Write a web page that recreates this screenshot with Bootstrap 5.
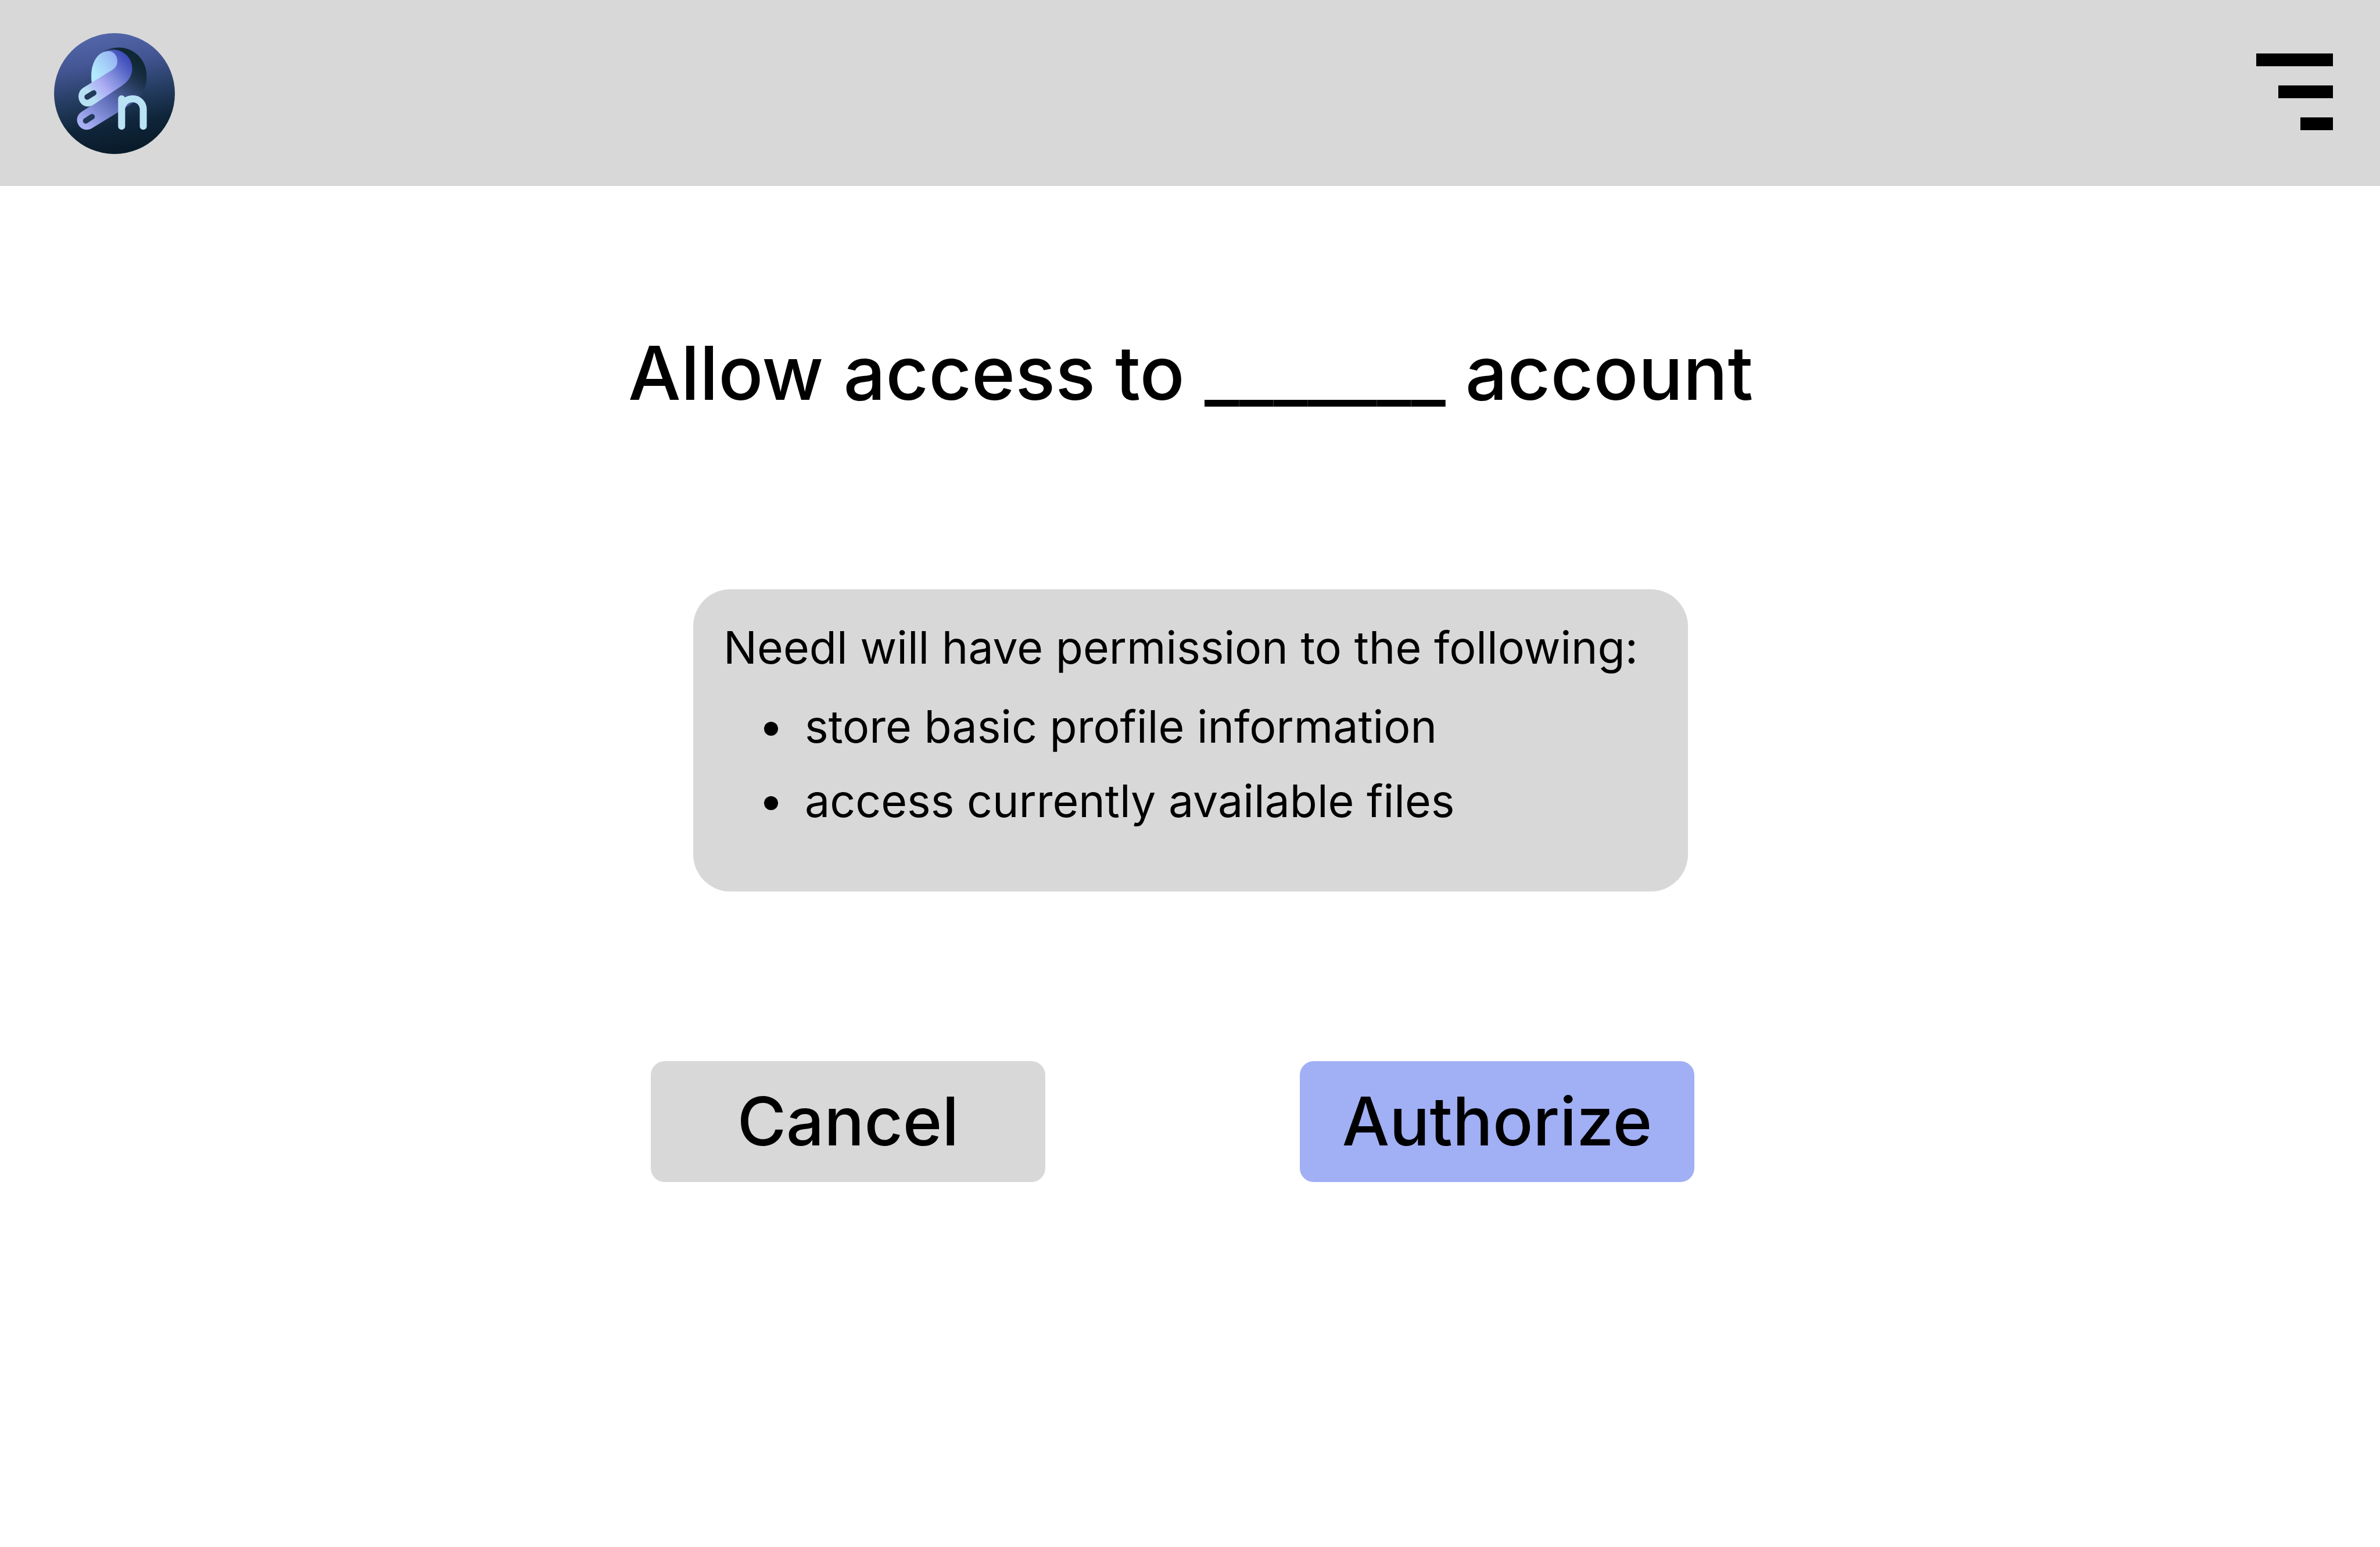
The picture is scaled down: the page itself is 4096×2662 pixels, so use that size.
<!DOCTYPE html>
<html lang="en">
<head>
<meta charset="utf-8">
<meta name="viewport" content="width=device-width, initial-scale=1">
<title>Needl – Allow access</title>
<link href="https://cdn.jsdelivr.net/npm/bootstrap@5.3.0/dist/css/bootstrap.min.css" rel="stylesheet">
<style>
  body { font-family: Inter, "Liberation Sans", sans-serif; color: #000; background: #fff; }
  .topbar { min-height: 320px; padding: 2px 81px 0 93px; background: #d8d8d8; }
  .brand-logo { width: 208px; height: 208px; }
  .menu-toggle svg { width: 132px; height: 138px; }
  .consent { padding: 242px 48px 0 50px; gap: 292px; }
  .consent-title { font-size: 128px; line-height: 160px; font-weight: 500; }
  .scope-card { width: 100%; max-width: 1712px; padding: 36px 52px 92px; border-radius: 64px; background: #d8d8d8; font-size: 77px; line-height: 128px; }
  .scope-list { margin-top: 8px; padding-left: 70px; }
  .scope-list li { gap: 46px; }
  .scope-list li::before { content: ""; flex: none; width: 24px; height: 24px; margin-top: 8px; border-radius: 50%; background: #000; }
  .action-row { gap: 438px; margin-right: 62px; }
  .action-btn { width: 679px; height: 208px; padding: 0; border: 0; border-radius: 24px; font-size: 115px; line-height: 160px; font-weight: 500; color: #000; background: #d8d8d8; }
  .action-btn:hover { color: #000; background: #c8c8c8; }
  .action-main { background: #a1aff5; }
  .action-main:hover { background: #8c9cf0; }
</style>
</head>
<body>
<header class="topbar d-flex align-items-center justify-content-between">
  <a href="#" class="d-block" aria-label="Needl home">
    <svg class="brand-logo d-block" viewBox="93 76 810 810" aria-hidden="true">
      <defs>
        <linearGradient id="disc" gradientUnits="userSpaceOnUse" x1="430" y1="76" x2="570" y2="886">
          <stop offset="0" stop-color="#5366aa"/><stop offset=".25" stop-color="#435592"/><stop offset=".5" stop-color="#263e63"/><stop offset=".75" stop-color="#0f253a"/><stop offset="1" stop-color="#081a28"/>
        </linearGradient>
        <linearGradient id="back" gradientUnits="userSpaceOnUse" x1="280" y1="690" x2="650" y2="270">
          <stop offset="0" stop-color="#abb1f5"/><stop offset=".2" stop-color="#8793dc"/><stop offset=".45" stop-color="#5b6bb5"/><stop offset=".66" stop-color="#364a78"/><stop offset=".86" stop-color="#1a3148"/><stop offset="1" stop-color="#102734"/>
        </linearGradient>
        <linearGradient id="front" gradientUnits="userSpaceOnUse" x1="330" y1="480" x2="605" y2="250">
          <stop offset="0" stop-color="#b7e0f4"/><stop offset=".1" stop-color="#b4c9f5"/><stop offset=".28" stop-color="#aeaff5"/><stop offset=".55" stop-color="#7f8bdc"/><stop offset=".8" stop-color="#5463c4"/><stop offset="1" stop-color="#3a49b8"/>
        </linearGradient>
        <linearGradient id="petal" gradientUnits="userSpaceOnUse" x1="360" y1="340" x2="510" y2="230">
          <stop offset="0" stop-color="#b3e9fc"/><stop offset=".5" stop-color="#a5cff8"/><stop offset="1" stop-color="#94b0f2"/>
        </linearGradient>
      </defs>
      <circle cx="498" cy="481" r="405" fill="url(#disc)"/>
      <path fill="url(#back)" d="M278 603 L345 560 L345 330 C350 240 430 172 527 172 C630 172 713 255 713 360 C713 450 680 510 610 552 L348 713 C318 732 278 724 258 693 C238 662 246 624 278 603 Z"/>
      <path fill="url(#front)" d="M289 442 L346 407 C330 280 395 187 490 187 C560 187 617 244 617 312 C617 362 590 402 545 430 L358 555 C322 579 286 567 267 537 C248 505 256 462 289 442 Z"/>
      <path fill="url(#petal)" d="M346 407 C330 290 378 197 458 197 C494 197 517 228 517 264 C517 292 503 310 482 323 Z"/>
      <path fill="none" stroke="#22395a" stroke-width="37" stroke-linecap="round" d="M315 504 L359 477 M305 664 L348 636"/>
      <path fill="none" stroke="#b9e3f5" stroke-width="47" stroke-linecap="round" stroke-linejoin="round" d="M546 700 V516 M546 588 C546 548 578 516 620 516 C662 516 691 548 691 588 V700"/>
    </svg>
  </a>
  <button type="button" class="menu-toggle btn border-0 p-0 rounded-0" aria-label="Menu">
    <svg class="d-block" viewBox="0 0 132 138" aria-hidden="true">
      <path d="M0 0H132V22H0Z M38 55H132V77H38Z M76 110H132V132H76Z"/>
    </svg>
  </button>
</header>
<main class="consent d-flex flex-column align-items-center">
  <h1 class="consent-title mb-0 text-center">Allow access to _______ account</h1>
  <section class="scope-card">
    <p class="mb-0">Needl will have permission to the following:</p>
    <ul class="scope-list list-unstyled mb-0">
      <li class="d-flex align-items-center">store basic profile information</li>
      <li class="d-flex align-items-center">access currently available files</li>
    </ul>
  </section>
  <div class="action-row d-flex justify-content-center">
    <button type="button" class="btn action-btn">Cancel</button>
    <button type="button" class="btn action-btn action-main">Authorize</button>
  </div>
</main>
<script src="https://cdn.jsdelivr.net/npm/bootstrap@5.3.0/dist/js/bootstrap.bundle.min.js"></script>
</body>
</html>
